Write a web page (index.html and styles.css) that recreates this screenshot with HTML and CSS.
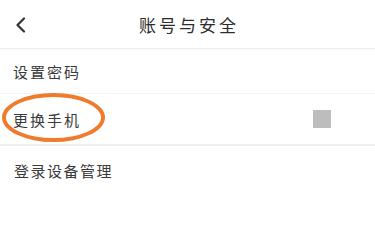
FILE: index.html
```html
<!DOCTYPE html>
<html lang="zh">
<head>
<meta charset="utf-8">
<title>账号与安全</title>
<link rel="stylesheet" href="styles.css">
</head>
<body>
<div class="page">
  <header class="nav">
    <span class="back">
      <svg width="12" height="16" viewBox="0 0 12 16"><polyline points="9,1.5 2.5,8 9,14.5" fill="none" stroke="#333" stroke-width="2.2" stroke-linecap="round" stroke-linejoin="round"/></svg>
    </span>
    <h1 class="title">账号与安全</h1>
    <span class="spacer"></span>
  </header>
  <div class="row row-first">设置密码</div>
  <div class="row row-phone">
    <span class="label">更换手机</span>
    <span class="square"></span>
    <span class="mark"></span>
  </div>
  <div class="row row-last">登录设备管理</div>
</div>
</body>
</html>
```
FILE: styles.css
```css
* { box-sizing: border-box; }
html, body { margin: 0; padding: 0; background: #fff; }
body {
  font-family: "Noto Sans CJK SC", "Noto Sans", sans-serif;
  color: #333;
  width: 375px;
  height: 205px;
  overflow: hidden;
}
.page { display: flex; flex-direction: column; }
.nav {
  height: 49px;
  display: grid;
  grid-template-columns: 60px 1fr 60px;
  align-items: center;
  border-bottom: 1px solid #ececec;
  box-shadow: 0 1px 2px rgba(0,0,0,0.04);
}
.back { display: flex; padding-left: 15px; padding-top: 1px; }
.title {
  margin: 0;
  text-align: center;
  font-size: 17px;
  font-weight: 400;
  letter-spacing: 3px;
  text-indent: 3px;
  color: #2c2c2c;
}
.row {
  display: flex;
  align-items: center;
  padding-left: 13px;
  font-size: 15px;
  letter-spacing: 2px;
  color: #3a3a3a;
}
.row-first { height: 45px; border-bottom: 1px solid #f3f3f3; }
.row-phone {
  position: relative;
  height: 52px;
  border-bottom: 2px solid #efefef;
  padding-top: 0;
}
.label { flex: 1; }
.square {
  width: 18px;
  height: 18px;
  background: #bdbdbd;
  margin-right: 44px;
}
.mark {
  position: absolute;
  left: 2px;
  top: -1px;
  width: 103px;
  height: 49px;
  border: 4px solid #ef7b2c;
  border-radius: 50%;
}
.row-last { height: 49px; padding-left: 14px; letter-spacing: 1.5px; }
```
